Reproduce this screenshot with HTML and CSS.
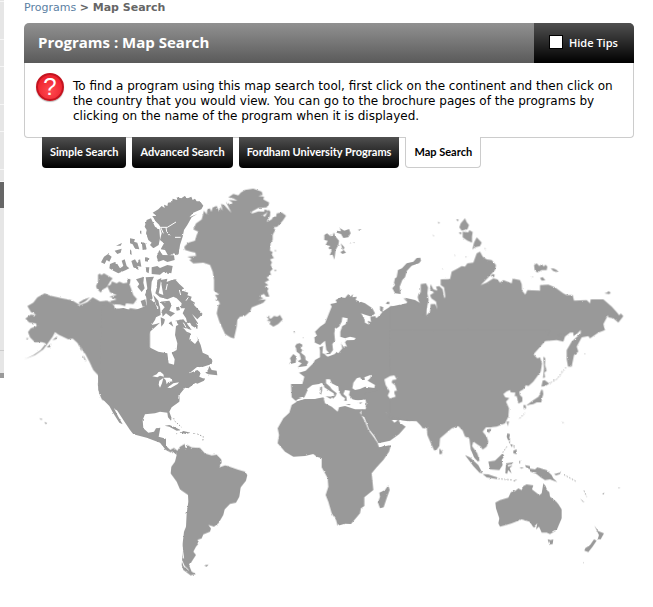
FILE: index.html
```
<!doctype html>
<html lang="en">
    <head>
        <meta charset="utf-8">
        <meta name="viewport" content="width=device-width, initial-scale=1">
        <title>Programs : Map Search</title>
        <link rel="stylesheet" href="styles.css">
    </head>

    <body>
        <div class="sidebar">
            <div class="item first"></div>
            <div class="item tall"></div>
            <div class="item"></div>
            <div class="item tall"></div>
            <div class="item"></div>
            <div class="item tall"></div>
            <div class="item gap"></div>
            <div class="item current"></div>
            <div class="item rest"></div>
            <div class="item last"></div>
            <div class="foot"></div>
        </div>

        <div class="main">
            <div class="crumbs">
                <a href="#">Programs</a> <b>&gt; Map Search</b>
            </div>

            <div class="panel">
                <div class="header">
                    <h1>Programs : Map Search</h1>
                    <div class="tips">
                        <input type="checkbox" id="hide">
                        <label for="hide">Hide Tips</label>
                    </div>
                </div>
                <div class="help">
                    <span class="icon">?</span>
                    <p>To find a program using this map search tool, first click on the continent and then click on the country that you would view. You can go to the brochure pages of the programs by clicking on the name of the program when it is displayed.</p>
                </div>
            </div>

            <div class="tabs">
                <a href="#">Simple Search</a>
                <a href="#">Advanced Search</a>
                <a href="#">Fordham University Programs</a>
                <a href="#" class="active">Map Search</a>
            </div>

            <svg class="map" viewBox="72 540 1830 1221" role="img" aria-label="World map">
                <!-- roughens the coast lines -->
                <filter id="coast" x="0" y="0" width="100%" height="100%" color-interpolation-filters="sRGB">
                    <feTurbulence type="fractalNoise" baseFrequency="0.09" numOctaves="2" seed="4" result="noise"/>
                    <feDisplacementMap in="SourceGraphic" in2="noise" scale="6" xChannelSelector="R" yChannelSelector="G"/>
                </filter>

                <g filter="url(#coast)">
                <!-- Alaska and western Canada -->
                <g transform="translate(0 540)">
                    <path d="M73,538 L100,525 122,510 138,490 125,486 105,487 90,472 84,456 92,445 110,438 108,430 88,428 76,416 92,404 108,406 100,398 94,398 82,378 100,368 112,352 134,340 150,347 190,356 215,360 240,375 262,366 278,352 300,364 322,362 342,376 345,386 372,386 378,398 390,384 412,388 425,392 440,386 450,392 L450,660 307,660 298,640 294,612 298,590 280,570 268,545 255,520 236,492 218,476 205,478 175,464 165,456 158,470 145,488 130,508 105,525Z"/>
                    <path d="M140,502 L153,491 150,502Z M157,480 L172,468 168,478Z M78,474 L86,474 82,478Z M118,714 L127,717 124,720Z M133,726 L140,728 138,733Z M236,368 L252,358 270,352 256,364 240,372Z"/>
                    <path class="thin" d="M234,488 L245,512 M246,498 L254,520 M250,528 L257,543 M276,560 L302,578"/>
                    <path d="M294,284 L300,281 304,285 312,280 326,288 338,295 330,305 320,322 309,328 302,338 290,325 288,318 294,305Z"/>
                    <path d="M322,318 L332,314 336,304 350,310 358,305 370,310 382,308 384,297 392,298 388,312 393,325 400,345 411,357 400,372 378,370 375,378 360,374 335,372 328,364 350,358 328,350 350,345 330,337Z"/>
                </g>

                <!-- Arctic islands -->
                <g transform="translate(240 540)">
                    <path d="M218,98 L235,88 245,78 254,84 252,74 262,78 264,68 276,66 278,56 292,60 290,52 304,55 314,48 323,55 334,50 338,60 345,56 350,64 360,64 370,77 364,88 340,98 328,112 352,102 335,112 322,135 312,150 308,170 300,195 296,222 290,226 282,220 265,228 255,210 242,208 252,190 240,180 245,160 238,135 225,122 217,108 230,108Z"/>
                    <path d="M200,120 L213,115 225,140 238,148 240,175 236,195 220,205 210,195 215,188 205,180 198,160 200,150 194,140Z"/>
                    <path d="M230,230 L238,210 248,225 282,226 284,240 262,246 250,240 235,245Z M215,262 L232,258 240,264 262,255 278,258 274,280 250,276 240,284 215,282Z"/>
                    <path d="M150,175 L165,178 162,185 172,188 178,208 165,206 158,193 150,190Z M185,185 L196,190 200,208 188,210Z M63,247 L72,230 84,222 95,230 88,245 80,240 74,252Z M90,252 L105,246 112,252 120,265 130,258 125,242 134,238 140,258 148,265 138,270 115,280 100,272 88,265Z M154,243 L165,238 172,250 180,236 184,260 172,258 176,270 160,262Z M195,232 L208,235 206,245 195,244Z M197,262 L208,262 206,280 199,276Z M104,212 L125,206 122,218 112,222Z M108,197 L126,189 122,197Z M180,152 L184,152 184,163 180,160Z M150,208 L154,212 155,225 150,222Z"/>
                    <path d="M168,298 L180,294 192,290 190,308 194,325 185,336 172,320 178,312Z M197,292 L222,290 215,305 213,330 218,355 208,365 195,345 202,325Z M142,300 L150,298 149,312 143,308Z M182,363 L196,358 200,378 188,380Z"/>
                    <path d="M232,300 L244,294 240,320 236,340 250,345 242,300 262,296 260,306 275,300 285,298 298,312 312,325 308,332 325,338 322,346 335,350 332,360 345,368 342,375 368,402 352,418 336,402 354,430 352,447 335,437 330,428 322,430 318,415 308,400 315,385 302,385 305,370 290,355 280,350 262,358 240,352 226,340 230,325Z"/>
                    <path d="M220,345 L235,362 240,385 228,375Z M240,365 L268,362 275,375 268,392 285,400 272,410 258,400 248,410 245,392 254,382Z M288,382 L297,380 300,390 290,392Z M242,412 L255,418 252,430 244,440Z M286,422 L310,418 320,430 335,450 300,440Z M266,430 L274,424 280,440Z"/>
                    <path class="inlet" d="M218,112 L228,132 242,142 262,142 288,126 M242,142 L250,160 M258,142 L260,155 270,166 M285,172 L302,172 M262,312 L258,330 M298,330 L302,345 M325,352 L318,362"/>
                </g>

                <!-- North and Central America -->
                <g transform="translate(240 960)">
                    <path d="M66,-45 L90,-40 104,-30 130,-36 160,-28 188,-38 200,-44 198,-90 212,-92 214,-60 225,-50 232,-35 240,-42 242,-15 228,-8 225,0 215,15 228,12 240,8 225,22 210,35 202,55 205,80 235,95 262,100 266,130 282,134 284,118 275,98 290,90 292,70 285,45 288,18 300,12 320,35 332,40 328,58 345,72 354,60 350,48 362,75 368,98 385,106 388,114 372,116 390,113 398,120 395,132 370,140 350,142 328,160 352,150 362,158 358,170 375,178 345,190 325,205 315,203 300,222 298,245 275,262 268,275 275,295 273,302 264,292 262,278 240,275 225,280 195,283 188,300 190,325 205,338 222,335 228,325 241,323 236,350 258,356 258,378 270,390 288,390 290,405 275,392 255,387 240,368 200,353 160,343 150,330 130,300 112,272 102,265 115,290 128,313 118,308 100,280 88,258 65,235 55,210 54,165 60,150Z"/>
                    <path d="M388,138 L395,150 410,152 412,166 385,163 376,158 384,150Z M346,188 L362,178 375,175 372,182 352,191Z M254,317 L268,315 285,322 303,331 290,332 268,320Z M302,338 L310,333 332,338 318,342Z M340,339 L347,340 340,342Z M286,340 L293,341 288,343Z M278,295 L286,297 280,298Z"/>
                    <path class="dots" d="M284,303 L305,322 M352,342 L370,350 368,366"/>
                    <path class="sea" d="M217,169 L230,163 238,153 250,163 252,170 240,167 232,172Z M238,182 L250,174 246,190 240,203 236,194Z M250,173 L270,173 278,184 265,186 260,193 257,180Z M262,203 L280,190 297,187 293,192 272,204Z"/>
                    <path class="inlet" d="M298,225 L296,236 M284,-10 L284,20 M310,8 L318,22"/>
                </g>

                <!-- South America -->
                <g transform="translate(450 1290)">
                    <path d="M45,46 L60,60 72,54 82,62 90,50 104,42 106,54 112,45 125,52 150,54 165,70 185,76 200,74 214,88 215,98 208,112 225,106 232,108 262,118 285,125 292,135 288,152 272,172 268,200 258,218 240,222 224,238 220,255 205,280 192,290 175,285 183,295 180,305 160,313 155,325 142,330 148,338 138,350 130,365 138,375 125,395 118,408 125,425 138,432 122,436 100,420 95,405 98,370 98,340 102,305 108,290 110,250 115,215 114,195 90,178 80,155 62,130 64,110 75,95 80,75 78,66 70,62 62,67 45,58Z M162,406 L176,403 170,410 165,408Z"/>
                    <path class="inlet" d="M108,47 L110,57 M96,350 L101,385 M96,392 L104,412 M100,405 L116,420"/>
                </g>

                <!-- Greenland and Iceland -->
                <g transform="translate(510 540)">
                    <path d="M43,200 L55,188 75,182 80,165 85,155 70,148 78,130 95,118 102,92 110,103 112,88 120,85 124,96 128,82 140,78 148,96 150,80 158,92 153,72 162,75 184,98 168,66 182,75 188,68 176,60 202,62 190,55 175,52 190,42 205,46 212,38 225,30 250,26 275,35 278,45 265,48 282,50 280,58 298,68 290,82 265,84 245,95 245,101 265,94 282,95 284,88 295,92 288,100 278,106 285,110 296,90 301,95 300,108 290,126 305,118 310,110 318,110 320,100 335,97 348,107 340,120 330,132 322,140 310,142 316,150 308,165 308,180 302,188 300,212 308,216 305,225 312,234 300,238 306,247 302,255 308,267 300,275 303,285 290,292 298,300 284,307 295,315 284,320 296,325 292,332 298,350 288,350 282,342 268,348 280,355 265,360 288,358 280,368 245,382 240,395 225,408 210,410 202,420 200,440 192,475 182,472 165,462 155,440 148,425 140,400 145,375 150,372 145,362 135,360 142,355 135,345 148,344 132,332 132,300 128,275 120,255 100,248 70,250 58,240 66,236 52,230 78,228 76,218 62,215 45,210Z"/>
                    <path d="M290,410 L300,408 296,413 303,416 312,408 322,410 330,405 334,412 338,418 325,432 310,440 298,432 302,424 290,422 297,418Z M312,270 L320,270 316,274Z M314,210 L320,212 315,214Z M372,456 L374,456 374,459 372,459Z M380,492 L390,490 398,498 386,506 375,500Z"/>
                </g>

                <!-- Europe -->
                <g transform="translate(795 660)">
                    <path d="M78,492 L112,492 118,470 102,458 122,452 145,430 150,420 165,412 165,392 163,382 174,378 172,400 180,402 192,398 184,390 180,362 165,375 150,368 148,352 156,348 150,335 165,320 180,310 190,285 200,260 196,252 215,248 212,240 228,232 240,234 250,222 256,230 264,222 262,232 275,230 272,240 300,250 322,265 330,280 320,290 300,284 288,280 298,295 300,308 312,314 308,302 318,306 316,292 330,288 334,295 345,285 352,276 345,272 345,258 355,262 352,275 375,260 400,255 425,250 430,244 420,233 450,240 475,255 485,258 480,600 372,600 362,576 300,560 300,540 98,548 80,532Z"/>
                    <path d="M92,378 L102,370 112,374 106,384 112,390 108,398 120,408 122,420 130,425 125,438 98,442 110,430 98,424 108,418 104,402 95,395Z M75,415 L85,402 95,410 92,428 73,433 78,424Z"/>
                    <path d="M178,45 L186,40 198,50 196,42 203,48 206,37 212,50 222,62 220,75 212,90 208,119 203,104 194,106 200,92 190,84 196,78 182,75 188,62 178,60Z M215,32 L228,34 224,24 238,32 252,27 257,40 250,52 235,54 228,42 215,38Z M227,70 L238,82 236,90 243,98 232,102 226,96 234,92Z M279,29 L289,27 284,33Z M265,67 L270,68 266,70Z M256,69 L258,70 256,72Z"/>
                    <path d="M455,114 L466,113 468,122 462,130 440,137 426,152 420,172 412,180 404,200 407,222 390,220 382,205 390,195 387,188 390,175 395,172 399,150 411,145 425,130 445,125Z M366,245 L373,245 373,253 363,252Z M87,333 L89,333 89,337 86,336Z M113,352 L115,352 114,356Z"/>
                    <path class="sea" d="M232,292 L248,295 246,306 240,314 232,318 226,335 226,350 240,355 255,350 272,354 268,360 245,361 240,367 246,380 238,378 238,385 228,370 232,385 220,400 212,395 210,402 188,410 178,403 195,402 204,390 202,372 210,362 208,340 210,328 222,320 230,305Z"/>
                    <path class="sea" d="M90,545 L98,538 118,532 128,510 125,508 142,495 162,492 170,488 176,494 178,502 190,510 206,520 208,528 198,528 204,536 212,528 215,520 200,508 195,500 183,490 183,478 195,478 200,490 220,500 222,515 230,528 240,535 236,548 246,545 244,530 235,522 240,510 255,512 252,525 262,538 280,542 300,538 306,545 302,560 290,568 262,562 250,555 240,558 235,562 222,573 195,562 178,555 172,545 178,535 150,537 120,538Z"/>
                    <path class="sea" d="M262,505 L265,488 275,475 285,472 290,480 300,480 298,472 318,464 316,474 308,482 330,495 328,504 300,500 285,507 270,510Z"/>
                    <path d="M166,500 L171,500 171,512 168,524 164,520Z M182,529 L201,530 197,537Z M242,553 L256,552 254,556Z M282,548 L292,547 286,552Z"/>
                </g>

                <!-- Africa and Arabia -->
                <g transform="translate(795 1140)">
                    <path d="M95,65 L118,58 150,57 175,52 180,70 200,80 218,95 222,82 240,78 270,88 292,88 285,98 300,125 310,150 325,170 338,190 342,202 378,195 372,215 355,240 335,262 320,280 322,300 325,330 298,352 298,378 288,385 285,400 258,432 240,431 218,437 213,420 200,400 190,365 182,345 190,320 188,295 170,262 170,235 155,230 145,222 120,228 85,230 60,215 38,190 42,165 38,145 55,115 73,98 80,75Z"/>
                    <path d="M290,88 L302,88 304,75 300,40 480,0 480,147 468,136 455,122 430,124 408,121 405,114 402,123 385,118 370,98 362,95 370,108 388,128 400,120 405,128 422,140 402,163 375,182 340,190 328,168 312,148 298,112 288,106Z"/>
                    <path d="M370,316 L374,330 365,355 356,382 345,385 339,368 345,350 343,338 360,330Z"/>
                </g>

                <!-- Northern Asia -->
                <g transform="translate(1170 600)">
                    <path d="M0,318 L20,320 45,312 50,318 52,306 40,294 65,302 92,320 83,292 86,280 92,278 92,252 108,250 114,262 112,280 116,300 110,325 98,343 108,347 120,335 122,312 136,312 142,328 138,305 124,295 120,285 132,278 120,268 122,252 130,268 142,272 138,260 148,258 158,268 163,295 166,290 162,262 152,255 152,238 180,237 185,215 198,208 215,198 225,200 232,190 250,188 260,160 270,155 278,170 290,178 305,180 318,195 315,210 295,232 272,255 290,248 310,235 322,238 330,248 340,240 365,250 368,236 390,240 395,252 396,272 406,284 412,270 450,272 450,255 475,254 495,262 520,280 530,285 548,285 552,302 590,300 600,310 602,298 640,298 665,320 678,334 688,346 692,340 700,348 685,368 670,355 655,352 654,345 640,372 645,390 625,398 600,415 595,408 575,412 560,440 565,455 552,465 545,500 534,500 530,478 530,450 545,425 572,400 572,390 560,402 550,408 550,398 540,398 525,410 520,425 500,420 465,423 430,462 440,475 455,500 L0,500Z"/>
                    <path d="M225,55 L230,66 237,75 232,88 215,92 208,82 212,70Z M218,95 L235,97 238,90 248,96 246,110 246,128 232,122 218,112Z M260,112 L275,128 270,138 255,142 247,149 252,128Z M206,97 L215,97 212,104Z M198,58 L206,58 204,64Z M143,66 L150,67 146,71Z M128,104 L133,108 130,108Z M283,144 L288,145 285,147Z M226,170 L230,170 228,173Z M156,205 L160,205 158,207Z M194,165 L197,166 195,168Z"/>
                    <path d="M432,195 L440,190 448,198 455,192 462,200 466,194 472,200 470,210 455,210 442,218 434,210Z M482,205 L492,206 503,212 500,216 490,213Z M450,234 L458,231 466,241 455,242Z M643,280 L652,277 655,273 662,278 658,282Z M426,229 L430,230 427,232Z M302,228 L308,222 314,224 312,232Z M583,460 L586,460 585,464Z"/>
                </g>

                <!-- South and east Asia -->
                <g transform="translate(1170 1020)">
                    <path d="M0,-30 L480,-30 465,3 430,43 442,55 450,52 456,70 452,95 430,125 415,138 408,135 400,148 388,155 390,165 397,172 397,185 385,191 380,168 374,168 376,158 362,157 360,150 350,154 340,162 346,172 358,174 348,185 357,205 355,230 345,250 320,260 300,262 288,262 278,275 290,290 295,305 290,320 278,329 272,320 265,315 250,305 246,318 262,340 269,365 258,356 242,328 238,295 225,290 218,272 205,258 185,265 150,295 148,318 138,332 132,330 125,315 112,285 110,262 98,265 92,255 80,243 50,240 30,238 0,222Z"/>
                    <path d="M148,325 L157,335 155,342 148,342Z M460,50 L466,55 465,75 470,92 463,98 465,112 459,114 462,85Z M454,140 L458,122 464,120 478,131 465,138Z M454,149 L458,150 460,162 456,175 454,187 440,187 430,192 410,195 430,180 446,170Z M400,195 L407,195 408,205 402,208Z M411,193 L422,191 414,197Z M350,245 L357,244 353,259Z M292,268 L303,266 298,279 292,275Z M517,246 L522,247 518,249Z M500,-15 L522,-20 518,-6Z"/>
                    <path class="dots" d="M482,128 L500,118 528,82 M404,220 L388,236"/>
                </g>

                <!-- Caspian Sea -->
                <g transform="translate(795 660)">
                    <path class="sea" d="M358,478 L375,468 388,466 395,478 382,480 380,488 390,495 396,512 388,513 388,520 392,530 375,536 368,527 374,514 362,495Z"/>
                </g>

                <!-- South east Asia and Oceania -->
                <g transform="translate(1350 1290)">
                    <path d="M62,55 L75,68 88,88 84,95 72,82Z M45,75 L60,82 85,105 98,130 88,128 70,108Z M98,132 L115,133 130,138 142,142 142,147 110,142Z M115,95 L135,92 158,70 163,78 155,90 158,105 148,120 120,118Z M168,100 L190,97 188,103 173,105 174,110 188,107 179,114 185,130 174,120 172,131 166,130Z M225,105 L240,108 240,116 255,118 262,112 290,120 305,135 310,145 322,156 300,148 285,150 272,142 260,132 240,124 240,118 228,112Z"/>
                    <path d="M172,10 L180,12 178,25 182,32 174,30 170,20Z M190,62 L200,58 200,72 190,70Z M180,42 L188,44 186,52Z M176,34 L182,36 178,40Z M190,44 L194,50 192,56Z M312,132 L330,128 334,122 330,132 318,136Z M190,152 L203,147 192,155Z M207,94 L211,92 210,104Z M208,112 L222,113 215,116Z M456,193 L463,188 462,193Z M504,172 L512,173 506,174Z M390,206 L404,217 398,215Z"/>
                    <path class="dots" d="M145,146 L188,150 M158,68 L172,48 M342,134 L378,154 M402,182 L410,200"/>
                    <path d="M136,218 L150,210 175,203 182,188 190,182 194,184 205,175 215,180 220,168 230,163 250,166 246,178 268,195 275,190 280,160 287,168 292,182 298,186 300,200 318,214 325,222 335,238 335,265 320,300 300,312 290,308 275,308 267,290 258,298 262,280 250,292 245,284 238,275 215,268 185,280 165,286 150,290 145,280 148,265 138,235Z M293,328 L302,330 310,328 308,342 298,344Z M433,287 L445,303 462,310 452,328 443,327 447,315Z M432,328 L440,332 428,350 415,366 403,362 406,354 420,345Z M399,398 L402,396 401,400Z"/>
                </g>
                </g>
            </svg>
        </div>
    </body>
</html>
```

FILE: styles.css
```
body{
    display: flex;
    align-items: flex-start;
    margin: 0;
    background: #fff;
    color: #000;
    font-family: Verdana, "DejaVu Sans", sans-serif;
    font-size: 12px;
}
.sidebar{
    flex: 0 0 4px;
    background: #e6e6e6;
}
.item{
    box-sizing: border-box;
    height: 27px;
    border-bottom: 1px solid #f6f6f6;
}
.item.first{
    height: 2px;
}
.item.tall{
    height: 38px;
}
.item.gap{
    height: 12px;
}
.item.current{
    height: 26px;
    border: 0;
    background: #666;
}
.item.rest{
    height: 143px;
    border-color: #ccc;
}
.item.last{
    height: 22px;
    border: 0;
}
.foot{
    height: 5px;
    background: #999;
}
.main{
    flex: 1;
    margin: 0 19px 20px 20px;
}
.crumbs{
    height: 23px;
    font-size: 11px;
    line-height: 15px;
    color: #666;
}
.crumbs a{
    color: #5b7fa3;
    text-decoration: none;
}
.header{
    display: flex;
    justify-content: space-between;
    height: 40px;
    overflow: hidden;
    border-radius: 5px 5px 0 0;
    background: linear-gradient(#919191, #5a5a5a);
    color: #fff;
}
h1{
    margin: 0 14px;
    font-family: "Trebuchet MS", "Open Sans", sans-serif;
    font-size: 15px;
    font-weight: 700;
    line-height: 38px;
}
.tips{
    display: flex;
    align-items: center;
    gap: 6px;
    box-sizing: border-box;
    width: 100px;
    padding: 0 0 2px 15px;
    background: linear-gradient(#505050, #000);
    font-family: "Trebuchet MS", "Open Sans", sans-serif;
    font-size: 11px;
    font-weight: 600;
    white-space: nowrap;
}
.tips input{
    appearance: none;
    width: 14px;
    height: 14px;
    margin: 0;
    border: 1px solid #000;
    background: #fff;
}
.help{
    display: flex;
    align-items: flex-start;
    gap: 9px;
    padding: 10px 14px 13px 11px;
    border: 1px solid #ccc;
    border-top: 0;
    border-radius: 0 0 4px 4px;
}
.help p{
    margin: 6px 0 0;
    font-size: 12px;
    line-height: 15px;
}
.icon{
    flex: none;
    box-sizing: border-box;
    width: 28px;
    height: 28px;
    border: 2px solid #c41420;
    border-radius: 50%;
    background: radial-gradient(circle at 50% 65%, #ff4a50, #ee2430 70%);
    box-shadow: 0 1px 1px #bbb;
    color: #fff;
    font-family: "Liberation Sans", sans-serif;
    font-size: 24px;
    line-height: 24px;
    text-align: center;
}
.tabs{
    display: flex;
    gap: 6px;
    margin: -1px 0 12px 18px;
}
.tabs a{
    padding: 0 8px;
    border-radius: 0 0 4px 4px;
    background: linear-gradient(#505050, #000);
    color: #fff;
    font-family: "Trebuchet MS", Lato, sans-serif;
    font-size: 11px;
    font-weight: 700;
    line-height: 30px;
    text-decoration: none;
    white-space: nowrap;
}
.tabs .active{
    border: 1px solid #ccc;
    border-top: 0;
    background: #fff;
    color: #000;
}
.map{
    display: block;
    width: 100%;
    fill: #999;
}
.sea{
    fill: #fff;
}
.thin, .inlet, .dots{
    fill: none;
    stroke: #999;
    stroke-width: 3px;
}
.inlet{
    stroke: #fff;
}
.dots{
    stroke-dasharray: 4 5;
}
```
